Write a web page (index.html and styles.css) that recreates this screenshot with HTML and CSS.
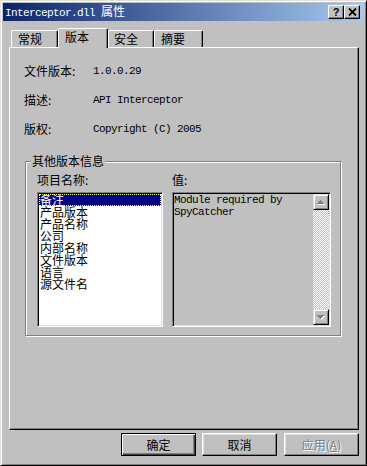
FILE: index.html
```html
<!DOCTYPE html>
<html>
<head>
<meta charset="utf-8">
<link rel="stylesheet" href="styles.css">
</head>
<body>
<div class="window">
  <div class="titlebar">
    <span class="title"><span class="mono">Interceptor.dll </span>属性</span>
    <div class="tbtns">
      <span class="tbtn help">?</span>
      <span class="tbtn close"><svg width="9" height="8" viewBox="0 0 9 8"><path d="M1 0.5L8 7.5M8 0.5L1 7.5" stroke="#000" stroke-width="1.8"/></svg></span>
    </div>
  </div>
  <div class="client">
    <div class="tabs">
      <div class="tab t1">常规</div>
      <div class="tab t2 active">版本</div>
      <div class="tab t3">安全</div>
      <div class="tab t4">摘要</div>
    </div>
    <div class="panel">
      <div class="props">
        <div class="lbl">文件版本:</div><div class="mono">1.0.0.29</div>
        <div class="lbl">描述:</div><div class="mono">API Interceptor</div>
        <div class="lbl">版权:</div><div class="mono">Copyright (C) 2005</div>
      </div>
      <div class="group">
        <span class="legend">其他版本信息</span>
        <div class="glabel">项目名称:</div>
        <div class="glabel">值:</div>
        <div class="listbox">
          <div class="item sel">备注</div>
          <div class="item">产品版本</div>
          <div class="item">产品名称</div>
          <div class="item">公司</div>
          <div class="item">内部名称</div>
          <div class="item">文件版本</div>
          <div class="item">语言</div>
          <div class="item">源文件名</div>
        </div>
        <div class="valuebox">
          <div class="valtext mono">Module required by SpyCatcher</div>
          <div class="vscroll">
            <div class="sbtn"><svg width="8" height="5" viewBox="0 0 8 5" shape-rendering="crispEdges"><g fill="#fff"><rect x="4" y="1" width="1" height="1"/><rect x="3" y="2" width="3" height="1"/><rect x="2" y="3" width="5" height="1"/><rect x="1" y="4" width="7" height="1"/></g><g fill="#808080"><rect x="3" y="0" width="1" height="1"/><rect x="2" y="1" width="3" height="1"/><rect x="1" y="2" width="5" height="1"/><rect x="0" y="3" width="7" height="1"/></g></svg></div>
            <div class="track"></div>
            <div class="sbtn"><svg width="8" height="5" viewBox="0 0 8 5" shape-rendering="crispEdges"><g fill="#fff"><rect x="1" y="1" width="7" height="1"/><rect x="2" y="2" width="5" height="1"/><rect x="3" y="3" width="3" height="1"/><rect x="4" y="4" width="1" height="1"/></g><g fill="#808080"><rect x="0" y="0" width="7" height="1"/><rect x="1" y="1" width="5" height="1"/><rect x="2" y="2" width="3" height="1"/><rect x="3" y="3" width="1" height="1"/></g></svg></div>
          </div>
        </div>
      </div>
    </div>
    <div class="buttons">
      <button class="btn default">确定</button>
      <button class="btn">取消</button>
      <button class="btn disabled">应用(<u>A</u>)</button>
    </div>
  </div>
</div>
</body>
</html>
```

FILE: styles.css
```css
html, body {
  margin: 0;
  padding: 0;
}
body {
  width: 367px;
  height: 466px;
  overflow: hidden;
  background: #c0c0c0;
  font-family: "Noto Sans CJK SC", sans-serif;
  font-size: 12px;
  color: #000;
}
.mono {
  font-family: "Liberation Mono", monospace;
  font-size: 11px;
  letter-spacing: -0.6px;
  white-space: pre-wrap;
}
.window {
  box-sizing: border-box;
  width: 367px;
  height: 466px;
  background: #c0c0c0;
  border: 1px solid;
  border-color: #dfdfdf #000 #000 #dfdfdf;
  box-shadow: inset 1px 1px #fff, inset -1px -1px #808080;
  padding: 2px;
  display: flex;
  flex-direction: column;
}
.titlebar {
  height: 18px;
  flex: none;
  background: linear-gradient(to right, #0a246a, #a6caf0);
  display: flex;
  align-items: center;
  justify-content: space-between;
  padding: 0 4px 0 2px;
  color: #fff;
}
.title {
  line-height: 18px;
  white-space: nowrap;
}
.tbtns {
  display: flex;
}
.tbtn {
  box-sizing: border-box;
  width: 16px;
  height: 14px;
  background: #c0c0c0;
  border: 1px solid;
  border-color: #fff #000 #000 #fff;
  box-shadow: inset -1px -1px #808080;
  display: flex;
  align-items: center;
  justify-content: center;
  color: #000;
}
.help {
  font-family: "Liberation Sans", sans-serif;
  font-weight: bold;
  font-size: 11px;
  line-height: 12px;
}
.client {
  flex: 1;
  padding: 7px 5px 0 6px;
  display: flex;
  flex-direction: column;
}
.tabs {
  height: 19px;
  display: flex;
  align-items: flex-end;
  padding-left: 2px;
}
.tab {
  box-sizing: border-box;
  height: 17px;
  border-top: 1px solid #fff;
  border-left: 1px solid #fff;
  border-right: 1px solid #000;
  border-radius: 2px 2px 0 0;
  box-shadow: inset -1px 0 #808080;
  padding-left: 6px;
  line-height: 16px;
  white-space: nowrap;
}
.t1 { width: 47px; }
.t2 { width: 50px; }
.t3 { width: 46px; padding-left: 5px; }
.t4 { width: 49px; }
.tab.active {
  height: 20px;
  margin-bottom: -1px;
  position: relative;
  z-index: 1;
  background: #c0c0c0;
  line-height: 15px;
}
.panel {
  box-sizing: border-box;
  height: 383px;
  border: 1px solid;
  border-color: #fff #000 #000 #fff;
  box-shadow: inset -1px -1px #808080;
}
.props {
  display: grid;
  grid-template-columns: 69px auto;
  grid-auto-rows: 29px;
  align-items: center;
  padding: 8px 0 0 14px;
}
.group {
  position: relative;
  box-sizing: border-box;
  width: 316px;
  margin: 18px 0 0 15px;
  border: 1px solid #808080;
  box-shadow: 1px 1px #fff, inset 1px 1px #fff;
  padding: 12px 9px 8px 11px;
  display: grid;
  grid-template-columns: 126px 159px;
  grid-template-rows: 12px 135px;
  column-gap: 9px;
  row-gap: 6px;
}
.legend {
  position: absolute;
  top: -8px;
  left: 5px;
  padding: 0 1px;
  background: #c0c0c0;
  line-height: 14px;
}
.glabel {
  line-height: 12px;
}
.listbox, .valuebox {
  box-sizing: border-box;
  height: 135px;
  border: 1px solid;
  border-color: #808080 #fff #fff #808080;
  box-shadow: inset 1px 1px #000, inset -1px -1px #dfdfdf;
  padding: 1px;
  overflow: hidden;
}
.listbox {
  background: #fff;
}
.item {
  height: 12px;
  line-height: 12px;
  padding-left: 1px;
  white-space: nowrap;
}
.item.sel {
  background: #000080;
  color: #fff;
  outline: 1px dotted #ffff80;
  outline-offset: -1px;
}
.valuebox {
  background: #c0c0c0;
  display: flex;
}
.valtext {
  flex: 1;
  line-height: 12px;
  white-space: normal;
}
.vscroll {
  width: 16px;
  display: flex;
  flex-direction: column;
}
.sbtn {
  box-sizing: border-box;
  width: 16px;
  height: 16px;
  border: 1px solid;
  border-color: #dfdfdf #000 #000 #dfdfdf;
  box-shadow: inset 1px 1px #fff, inset -1px -1px #808080;
  background: #c0c0c0;
  display: flex;
  align-items: center;
  justify-content: center;
}
.sbtn svg {
  display: block;
}
.track {
  flex: 1;
  background: repeating-conic-gradient(#fff 0 25%, #c0c0c0 0 50%) 0 0 / 2px 2px;
}
.buttons {
  margin-top: 3px;
  display: flex;
  justify-content: flex-end;
  gap: 6px;
}
.btn {
  box-sizing: border-box;
  width: 75px;
  height: 23px;
  padding: 0;
  margin: 0;
  background: #c0c0c0;
  border: 1px solid;
  border-color: #fff #000 #000 #fff;
  box-shadow: inset -1px -1px #808080, inset 1px 1px #dfdfdf;
  font: inherit;
  color: #000;
  line-height: 20px;
}
.btn.default {
  border-color: #000;
  box-shadow: inset 1px 1px #fff, inset -1px -1px #404040, inset -2px -2px #808080;
}
.btn.disabled {
  margin-left: 1px;
  color: #808080;
  text-shadow: 1px 1px #fff;
}
```
